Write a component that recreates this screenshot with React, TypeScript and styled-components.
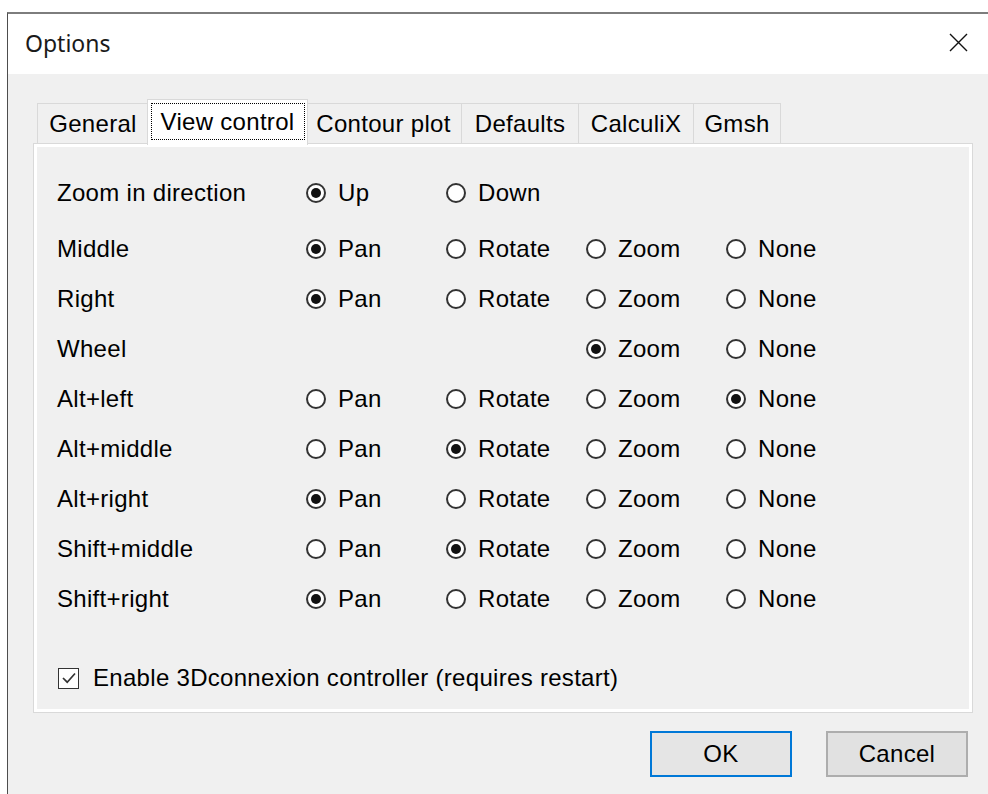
import styled, { createGlobalStyle } from 'styled-components'

type Choice = 'Up' | 'Down' | 'Pan' | 'Rotate' | 'Zoom' | 'None'

interface Row {
  label: string
  options: (Choice | null)[]
  selected: Choice
}

const rows: Row[] = [
  { label: 'Zoom in direction', options: ['Up', 'Down', null, null], selected: 'Up' },
  { label: 'Middle', options: ['Pan', 'Rotate', 'Zoom', 'None'], selected: 'Pan' },
  { label: 'Right', options: ['Pan', 'Rotate', 'Zoom', 'None'], selected: 'Pan' },
  { label: 'Wheel', options: [null, null, 'Zoom', 'None'], selected: 'Zoom' },
  { label: 'Alt+left', options: ['Pan', 'Rotate', 'Zoom', 'None'], selected: 'None' },
  { label: 'Alt+middle', options: ['Pan', 'Rotate', 'Zoom', 'None'], selected: 'Rotate' },
  { label: 'Alt+right', options: ['Pan', 'Rotate', 'Zoom', 'None'], selected: 'Pan' },
  { label: 'Shift+middle', options: ['Pan', 'Rotate', 'Zoom', 'None'], selected: 'Rotate' },
  { label: 'Shift+right', options: ['Pan', 'Rotate', 'Zoom', 'None'], selected: 'Pan' },
]

// tab captions with their fixed widths (the active one overlaps its neighbours)
const tabs = [
  { name: 'General', width: 112 },
  { name: 'View control', width: 161 },
  { name: 'Contour plot', width: 157 },
  { name: 'Defaults', width: 118 },
  { name: 'CalculiX', width: 116 },
  { name: 'Gmsh', width: 88 },
]

const App = () => {
  return (
    <>
      <GlobalStyle />
      <Window>
        <TitleBar>
          <Title>Options</Title>
          <CloseBtn>
            <svg width="19" height="19" viewBox="0 0 19 19">
              <path d="M1 1 L18 18 M18 1 L1 18" stroke="#111" strokeWidth="1.4" />
            </svg>
          </CloseBtn>
        </TitleBar>
        <Body>
          <TabStrip>
            {tabs.map((t) => (
              <Tab key={t.name} active={t.name === 'View control'} w={t.width}>
                {t.name === 'View control' ? <FocusRect>{t.name}</FocusRect> : t.name}
              </Tab>
            ))}
          </TabStrip>
          <Panel>
            {rows.map((r, i) => (
              <OptionRow key={r.label} first={i === 0}>
                <RowLabel>{r.label}</RowLabel>
                {r.options.map((o, j) =>
                  o ? (
                    <RadioItem key={j}>
                      <RadioCircle checked={o === r.selected} />
                      {o}
                    </RadioItem>
                  ) : (
                    <span key={j} />
                  )
                )}
              </OptionRow>
            ))}
            <CheckRow>
              <CheckBox>
                <svg width="18" height="18" viewBox="0 0 18 18">
                  <path d="M3 9 L7.2 13.2 L15 4.5" stroke="#333" strokeWidth="1.7" fill="none" />
                </svg>
              </CheckBox>
              Enable 3Dconnexion controller (requires restart)
            </CheckRow>
          </Panel>
          <ButtonRow>
            <DialogButton primary>OK</DialogButton>
            <DialogButton>Cancel</DialogButton>
          </ButtonRow>
        </Body>
      </Window>
    </>
  )
}

export default App

const GlobalStyle = createGlobalStyle`
  html, body {
    margin: 0;
    padding: 0;
    background: #ffffff;
  }
  body {
    font-family: "Liberation Sans", Arial, sans-serif;
    color: #000;
  }
`

const Window = styled.div`
  margin-top: 12px;
  margin-left: 7px;
  height: 780px;
  border-top: 2px solid #7d7d7d;
  border-left: 1px solid #4d4d4d;
  display: flex;
  flex-direction: column;
  overflow: hidden;
`

const TitleBar = styled.div`
  height: 60px;
  background: #ffffff;
  display: flex;
  align-items: center;
  justify-content: space-between;
  padding: 0 10px 0 17px;
`

const Title = styled.div`
  font-family: "Noto Sans", "Open Sans", sans-serif;
  font-size: 23px;
  color: #1a1a1a;
  margin-top: -2px;
`

const CloseBtn = styled.div`
  display: flex;
  align-items: center;
  justify-content: center;
  width: 40px;
  height: 40px;
  margin-top: -4px;
`

const Body = styled.div`
  flex: 1;
  background: #f0f0f0;
  padding: 25px 15px 0 25px;
  display: flex;
  flex-direction: column;
  letter-spacing: 0.3px;
`

const TabStrip = styled.div`
  display: flex;
  align-items: flex-end;
  height: 44px;
  padding-left: 5px;
`

const Tab = styled.div<{ active?: boolean; w: number }>`
  position: relative;
  box-sizing: border-box;
  width: ${({ w }) => w}px;
  height: ${({ active }) => (active ? '46px' : '40px')};
  margin: ${({ active }) => (active ? '0 -2px -2px -2px' : '0 0 0 -1px')};
  padding-top: ${({ active }) => (active ? '4px' : '0')};
  border: 1px solid #d9d9d9;
  border-bottom: none;
  background: ${({ active }) => (active ? '#ffffff' : '#f0f0f0')};
  z-index: ${({ active }) => (active ? 2 : 1)};
  font-size: 24px;
  display: flex;
  justify-content: center;
  align-items: ${({ active }) => (active ? 'flex-start' : 'center')};
  white-space: nowrap;
`

const FocusRect = styled.span`
  display: flex;
  align-items: center;
  justify-content: center;
  width: 152px;
  height: 35px;
  outline: 1px dotted #000;
`

const Panel = styled.div`
  position: relative;
  z-index: 1;
  box-sizing: border-box;
  height: 570px;
  border: 1px solid #d9d9d9;
  box-shadow: inset 0 0 0 3px #ffffff;
  background: #f0f0f0;
  padding: 24px 0 0 23px;
  font-size: 24px;
`

const OptionRow = styled.div<{ first?: boolean }>`
  display: grid;
  grid-template-columns: 249px 140px 140px 140px 140px;
  align-items: center;
  height: 50px;
  margin-bottom: ${({ first }) => (first ? '6px' : '0')};
`

const RowLabel = styled.span`
  white-space: nowrap;
`

const RadioItem = styled.label`
  display: flex;
  align-items: center;
  gap: 12px;
  white-space: nowrap;
`

const RadioCircle = styled.span<{ checked?: boolean }>`
  position: relative;
  box-sizing: border-box;
  width: 20px;
  height: 20px;
  border-radius: 50%;
  border: 2px solid #333;
  background: #fff;
  flex-shrink: 0;

  &::after {
    content: '';
    display: ${({ checked }) => (checked ? 'block' : 'none')};
    position: absolute;
    left: 3px;
    top: 3px;
    width: 10px;
    height: 10px;
    border-radius: 50%;
    background: #111;
  }
`

const CheckRow = styled.label`
  display: flex;
  align-items: center;
  gap: 14px;
  margin-top: 40px;
  padding-left: 1px;
  white-space: nowrap;
`

const CheckBox = styled.span`
  box-sizing: border-box;
  width: 21px;
  height: 21px;
  border: 1.6px solid #333;
  background: #fff;
  display: flex;
  align-items: center;
  justify-content: center;
`

const ButtonRow = styled.div`
  display: flex;
  justify-content: flex-end;
  gap: 34px;
  margin-top: 18px;
  padding-right: 5px;
`

const DialogButton = styled.button<{ primary?: boolean }>`
  box-sizing: border-box;
  width: 142px;
  height: 46px;
  font-family: "Liberation Sans", Arial, sans-serif;
  font-size: 24px;
  letter-spacing: 0.3px;
  color: #000;
  background: ${({ primary }) => (primary ? '#e5e5e5' : '#e1e1e1')};
  border: 2px solid ${({ primary }) => (primary ? '#0078d7' : '#adadad')};
  padding: 0;
`
